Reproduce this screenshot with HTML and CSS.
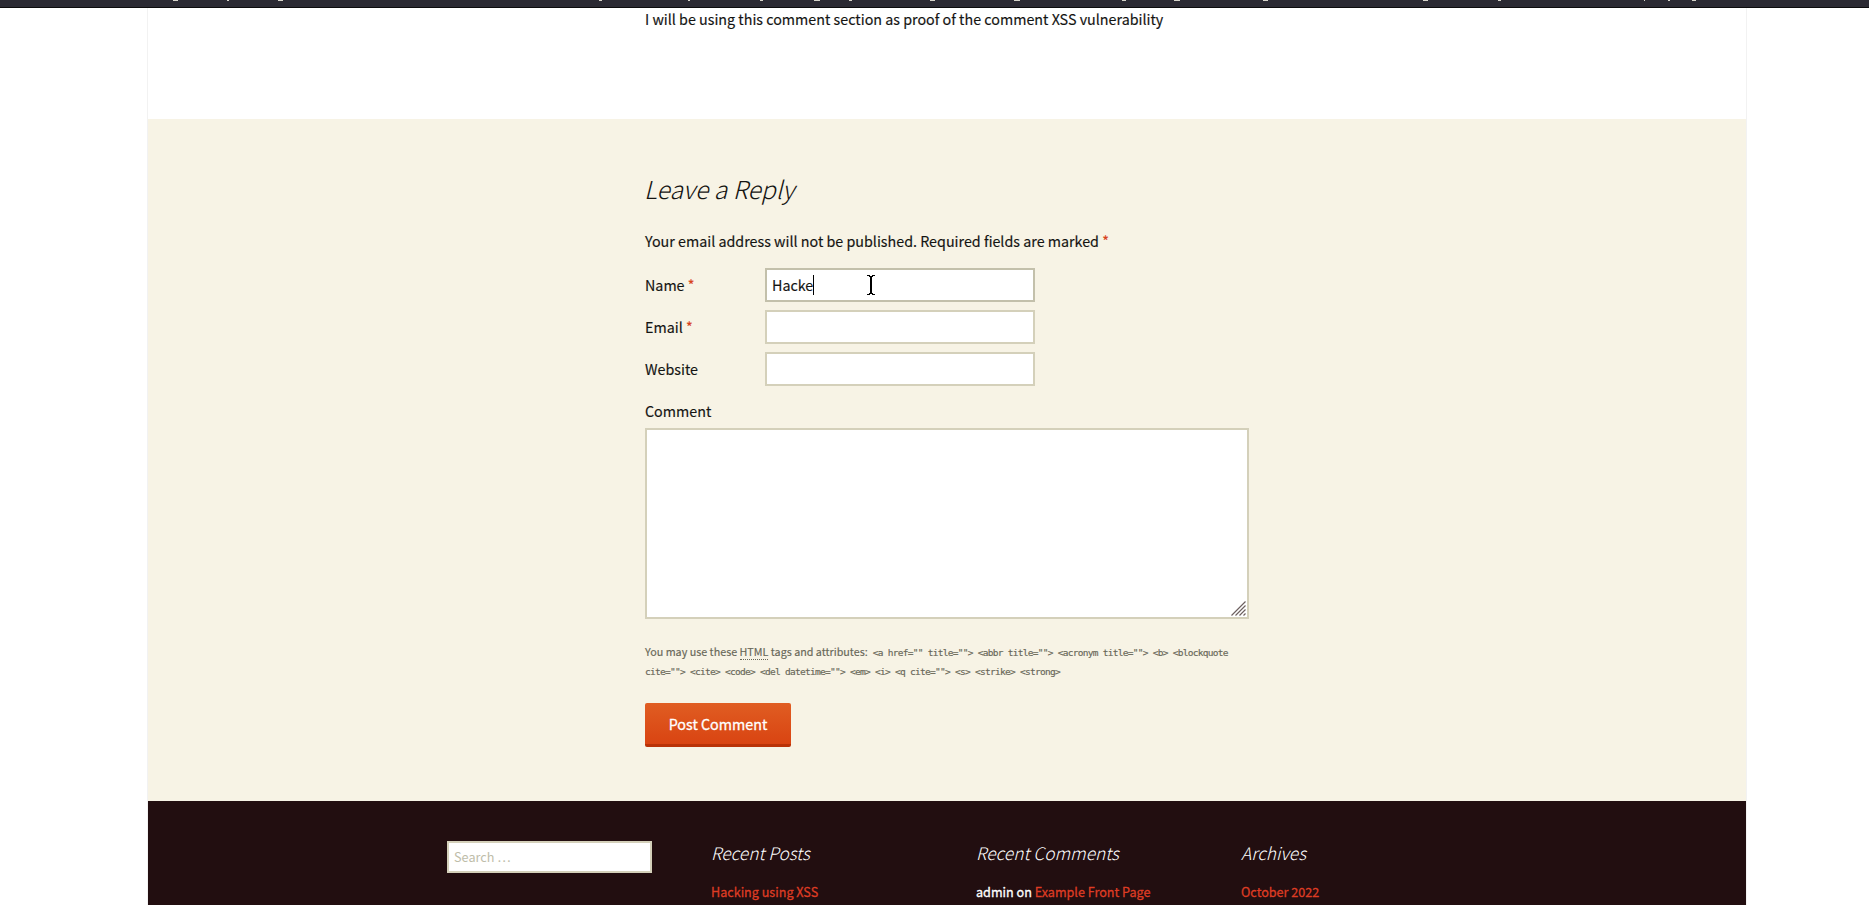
FILE: index.html
```html
<!DOCTYPE html>
<html lang="en">
<head>
<meta charset="utf-8">
<title>Example Front Page</title>
<link rel="stylesheet" href="styles.css">
</head>
<body>
<header class="topbar">
<svg class="topbar-marks" width="1869" height="1" viewBox="0 0 1869 1" aria-hidden="true"><path fill="#d8d6cc" d="M173 0h5v1h-5zM227 0h2v1h-2zM278 0h5v1h-5zM599 0h3v1h-3zM688 0h2v1h-2zM760 0h3v1h-3zM814 0h6v1h-6zM849 0h3v1h-3zM930 0h5v1h-5zM1014 0h6v1h-6zM1122 0h4v1h-4zM1174 0h6v1h-6zM1263 0h5v1h-5zM1423 0h5v1h-5zM1498 0h3v1h-3zM1644 0h1v1h-1zM1668 0h2v1h-2zM1692 0h4v1h-4z"/></svg>
</header>
<div class="site">
<main class="post"><p class="post-text">I will be using this comment section as proof of the comment XSS vulnerability</p></main>
<section class="respond">
<form class="form">
<h3 class="reply-title">Leave a Reply</h3>
<p class="notes">Your email address will not be published. Required fields are marked <b class="req">*</b></p>
<div class="field"><label class="label">Name <b class="req">*</b></label><div class="input focused"><span>Hacke</span><i class="caret"></i>
<svg class="ibeam" width="8" height="20" viewBox="0 0 8 20" shape-rendering="crispEdges" aria-hidden="true"><path fill="#000" d="M0 0h3v1h-3zM5 0h3v1h-3zM2 1h4v1h-4zM3 2h2v16h-2zM2 18h4v1h-4zM0 19h3v1h-3zM5 19h3v1h-3z"/></svg></div></div>
<div class="field"><label class="label">Email <b class="req">*</b></label><div class="input"></div></div>
<div class="field"><label class="label">Website</label><div class="input"></div></div>
<div class="field"><label class="label">Comment</label></div>
<div class="textarea"><svg class="grip" width="15" height="15" viewBox="0 0 15 15" aria-hidden="true"><path stroke="#6d6060" stroke-width="1.2" d="M.5 14.5l14-14M4.500 14.500l10-10M8.500 14.500l6-6M12.500 14.500l2-2"/></svg></div>
<div class="allowed"><p class="row"><span>You may use these <abbr class="abbr">HTML</abbr> tags and attributes:</span><code class="code">&lt;a href="" title=""&gt; &lt;abbr title=""&gt; &lt;acronym title=""&gt; &lt;b&gt; &lt;blockquote</code></p><p class="row"><code class="code">cite=""&gt; &lt;cite&gt; &lt;code&gt; &lt;del datetime=""&gt; &lt;em&gt; &lt;i&gt; &lt;q cite=""&gt; &lt;s&gt; &lt;strike&gt; &lt;strong&gt;</code></p></div>
<button class="submit" type="button">Post Comment</button>
</form>
</section>
<footer class="footer">
<div class="widget"><div class="search">Search …</div></div>
<div class="widget"><h3 class="wt">Recent Posts</h3><p class="wl"><a class="link">Hacking using XSS</a></p></div>
<div class="widget"><h3 class="wt">Recent Comments</h3><p class="wl">admin on <a class="link">Example Front Page</a></p></div>
<div class="widget"><h3 class="wt">Archives</h3><p class="wl"><a class="link">October 2022</a></p></div>
</footer>
</div>
</body>
</html>
```
FILE: styles.css
```css
* { box-sizing: border-box; }
body { margin: 0; height: 905px; overflow: hidden; background: #fff; color: #141412; font: 14.300px/24px "Noto Sans CJK JP", "Noto Sans CJK SC", sans-serif; }
p, h3 { margin: 0; }
.topbar { height: 8px; background: #2b2a33; border-bottom: 1px solid #0c0c0d; }
.topbar-marks { display: block; }
.site { width: 1600px; margin-left: 147px; border: solid #f2f2f2; border-width: 0 1px; }
.post { height: 111px; padding-left: 497px; }
.post-text { line-height: 22px; -webkit-text-stroke: 0.150px; }
.respond { height: 682px; background: #f7f3e5; padding: 51px 0 0 497px; }
.form { width: 604px; -webkit-text-stroke: 0.150px; }
.reply-title { height: 56px; margin-left: -1px; font-size: 24.700px; line-height: 37px; font-weight: 300; font-style: italic; -webkit-text-stroke: 0; }
.notes { height: 42px; line-height: 30px; }
.req { color: #d8421c; font-weight: 400; }
.field { display: flex; height: 42px; }
.label { width: 120px; line-height: 34px; }
.input { position: relative; width: 270px; height: 34px; border: 2px solid #d4d0ba; background: #fff; padding-left: 5px; line-height: 30px; display: flex; align-items: center; }
.focused { border-color: #c3c0ab; }
.caret { width: 1px; height: 20px; background: #000; }
.ibeam { position: absolute; left: 100px; top: 5px; }
.textarea { position: relative; margin-top: -8px; height: 191px; width: 604px; background: #fff; border: 2px solid #d4d0ba; }
.grip { position: absolute; right: 1px; bottom: 1px; }
.allowed { margin-top: 24px; height: 60px; font-size: 10.750px; color: #686758; white-space: nowrap; }
.row { display: flex; gap: 5px; height: 20px; line-height: 18px; align-items: baseline; }
.abbr { border-bottom: 1px dotted #686758; text-decoration: none; }
.code { font: 9.500px/18px "DejaVu Sans Mono", monospace; letter-spacing: -0.720px; }
.submit { display: block; width: 146px; height: 44px; border: 0; border-bottom: 3px solid #b93207; border-radius: 2px; background: linear-gradient(#e05d22, #d94412); color: #fff; font: 14.300px/38px "Noto Sans CJK JP", sans-serif; padding: 0; -webkit-text-stroke: 0.300px; }
.footer { height: 104px; background: #220e10; color: #fff; display: flex; gap: 60px; padding: 40px 0 0 299px; }
.widget { width: 205px; }
.search { height: 32px; border: 2px solid #d4d0ba; background: #fff; color: #bebda9; font-size: 12.700px; line-height: 28px; padding-left: 5px; }
.wt { height: 39px; margin-left: -1px; line-height: 24px; font-size: 17.300px; font-weight: 300; font-style: italic; }
.wl { margin-left: -1px; font-size: 12.600px; line-height: 24px; white-space: nowrap; -webkit-text-stroke: 0.300px; }
.link { color: #de3c24; }
```
